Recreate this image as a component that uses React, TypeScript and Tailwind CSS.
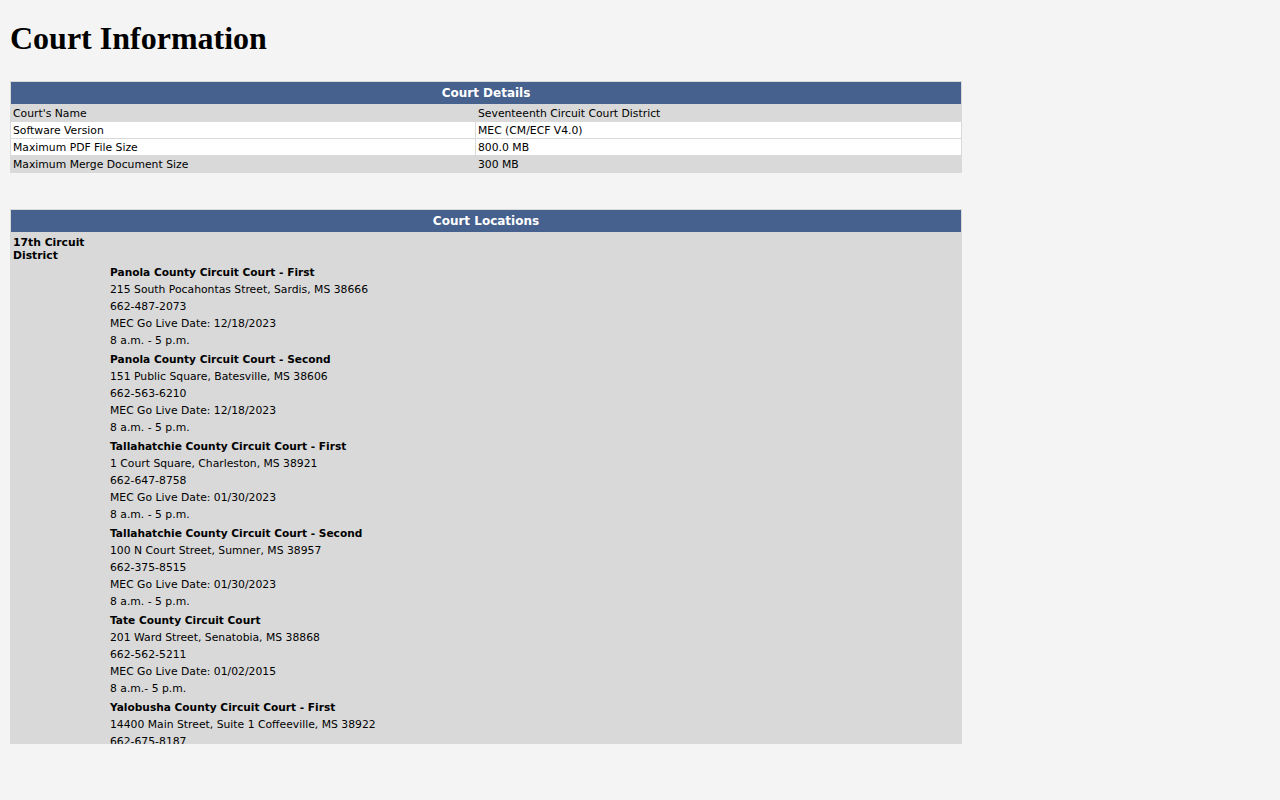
const DETAILS: { label: string; value: string; white?: boolean }[] = [
  { label: "Court's Name", value: "Seventeenth Circuit Court District" },
  { label: "Software Version", value: "MEC (CM/ECF V4.0)", white: true },
  { label: "Maximum PDF File Size", value: "800.0 MB", white: true },
  { label: "Maximum Merge Document Size", value: "300 MB" },
];

const COURTS: { name: string; lines: string[] }[] = [
  {
    name: "Panola County Circuit Court - First",
    lines: ["215 South Pocahontas Street, Sardis, MS 38666", "662-487-2073", "MEC Go Live Date: 12/18/2023", "8 a.m. - 5 p.m."],
  },
  {
    name: "Panola County Circuit Court - Second",
    lines: ["151 Public Square, Batesville, MS 38606", "662-563-6210", "MEC Go Live Date: 12/18/2023", "8 a.m. - 5 p.m."],
  },
  {
    name: "Tallahatchie County Circuit Court - First",
    lines: ["1 Court Square, Charleston, MS 38921", "662-647-8758", "MEC Go Live Date: 01/30/2023", "8 a.m. - 5 p.m."],
  },
  {
    name: "Tallahatchie County Circuit Court - Second",
    lines: ["100 N Court Street, Sumner, MS 38957", "662-375-8515", "MEC Go Live Date: 01/30/2023", "8 a.m. - 5 p.m."],
  },
  {
    name: "Tate County Circuit Court",
    lines: ["201 Ward Street, Senatobia, MS 38868", "662-562-5211", "MEC Go Live Date: 01/02/2015", "8 a.m.- 5 p.m."],
  },
  {
    name: "Yalobusha County Circuit Court - First",
    lines: ["14400 Main Street, Suite 1 Coffeeville, MS 38922", "662-675-8187"],
  },
];

const font = "font-['DejaVu_Sans',Verdana,sans-serif] text-[10.8px] text-black";

export default function App() {
  return (
    <div className="min-h-screen bg-[#f4f4f4] px-[10px]">
      <h1 className="pt-[20px] mb-[24px] font-['Liberation_Serif',serif] text-[32px] font-bold leading-[37px] text-black">
        Court Information
      </h1>

      <div className={`w-[952px] bg-[#d9d9d9] p-px flex flex-col gap-px ${font}`}>
        <div className="h-[22px] bg-[#46618e] text-white text-[12px] font-bold flex items-center justify-center">
          Court Details
        </div>
        {DETAILS.map((r) => (
          <div key={r.label} className="grid grid-cols-[464px_1fr] gap-px h-4">
            <div className={`h-4 overflow-hidden px-[2px] pt-px leading-[15px] ${r.white ? "bg-white" : ""}`}>{r.label}</div>
            <div className={`h-4 overflow-hidden px-[2px] pt-px leading-[15px] ${r.white ? "bg-white" : ""}`}>{r.value}</div>
          </div>
        ))}
      </div>

      <div className={`mt-[36px] w-[952px] h-[535px] overflow-hidden bg-[#d9d9d9] p-px flex flex-col gap-px ${font}`}>
        <div className="h-[22px] shrink-0 bg-[#46618e] text-white text-[12px] font-bold flex items-center justify-center">
          Court Locations
        </div>
        <div className="grid grid-cols-[97px_1fr] gap-x-px pt-[3px]">
          <div className="px-[2px] font-bold leading-[13px]">17th Circuit District</div>
          <div />
          <div className="col-start-2 pt-[2px] pl-px">
            {COURTS.map((c) => (
              <div key={c.name} className="mb-[2px] leading-[17px]">
                <div className="font-bold text-[10.6px]">{c.name}</div>
                {c.lines.map((l) => (
                  <div key={l}>{l}</div>
                ))}
              </div>
            ))}
          </div>
        </div>
      </div>
    </div>
  );
}
